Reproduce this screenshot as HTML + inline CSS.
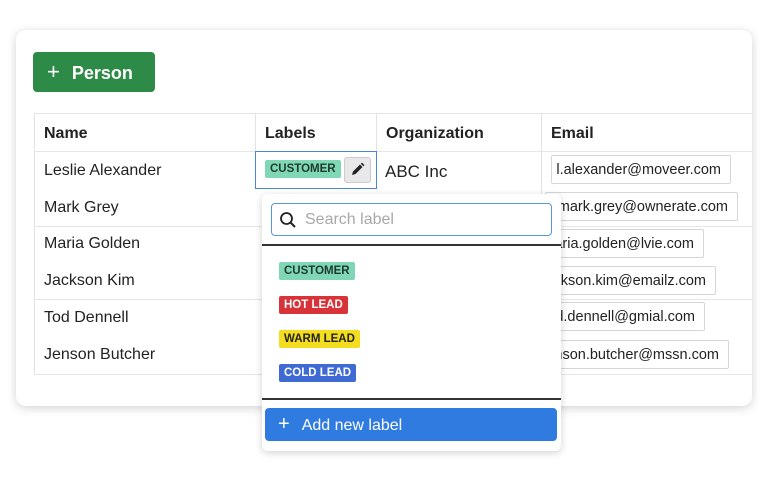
<!DOCTYPE html>
<html><head><style>
*{box-sizing:border-box;margin:0;padding:0}
body{width:768px;height:480px;background:#fff;font-family:"Liberation Sans",sans-serif;position:relative;overflow:hidden;color:#222}
.a{position:absolute}
.card{left:16px;top:30px;width:736px;height:376px;border-radius:10px;background:#fff;box-shadow:0 2px 10px rgba(0,0,0,.18);overflow:hidden}
.btn{left:33px;top:52px;width:122px;height:40px;background:#2e8b47;border-radius:4px;color:#fff;font-size:18px;font-weight:bold;line-height:40px;padding-left:14px}
.th{font-size:16px;font-weight:bold;top:125px}
.td{font-size:16px;color:#222}
.vl{width:1px;background:#e3e3e3}
.hl{height:1px;background:#e6e6e6}
.em{border:1px solid #d6d6d6;border-radius:2px;height:29px;font-size:14.5px;line-height:29px;padding-right:9px;text-align:right;color:#222;background:#fff;white-space:nowrap;overflow:hidden}
.tag{font-size:11.5px;font-weight:bold;height:18px;line-height:18px;padding:0 5px;border-radius:2px}
</style></head><body>
<div class="a card"></div>
<div class="a btn"><span style="font-weight:normal;font-size:22px;margin-right:12px">+</span>Person</div>
<div class="a hl" style="left:34px;top:113px;width:718px"></div>
<div class="a hl" style="left:34px;top:151px;width:718px"></div>
<div class="a hl" style="left:34px;top:226px;width:718px"></div>
<div class="a hl" style="left:34px;top:299px;width:718px"></div>
<div class="a hl" style="left:34px;top:374px;width:718px"></div>
<div class="a vl" style="left:34px;top:113px;height:261px"></div>
<div class="a vl" style="left:255px;top:113px;height:38px"></div>
<div class="a vl" style="left:376px;top:113px;height:38px"></div>
<div class="a vl" style="left:541px;top:113px;height:261px"></div>
<div class="a th" style="left:44px">Name</div>
<div class="a th" style="left:265px">Labels</div>
<div class="a th" style="left:386px">Organization</div>
<div class="a th" style="left:551px">Email</div>
<div class="a td" style="left:44px;top:162px">Leslie Alexander</div>
<div class="a td" style="left:44px;top:199px">Mark Grey</div>
<div class="a td" style="left:44px;top:235px">Maria Golden</div>
<div class="a td" style="left:44px;top:272px">Jackson Kim</div>
<div class="a td" style="left:44px;top:309px">Tod Dennell</div>
<div class="a td" style="left:44px;top:346px">Jenson Butcher</div>
<div class="a td" style="left:385px;top:162px;font-size:17px">ABC Inc</div>
<div class="a" style="left:255px;top:151px;width:122px;height:38px;border:1px solid #4a86d6"></div>
<div class="a tag" style="left:265px;top:160px;background:#7fd7b5;color:#1e3a2e">CUSTOMER</div>
<div class="a" style="left:344px;top:157px;width:27px;height:26px;background:#e8e8ea;border:1px solid #ccc;border-radius:3px"><svg width="25" height="24" viewBox="0 0 25 24"><path d="M7 17l1-3.5 7-7 2.5 2.5-7 7z M15.8 5.8l1.2-1.2 2.5 2.5-1.2 1.2z" fill="#222"/></svg></div>
<div class="a em" style="left:551px;top:155px;width:180px">l.alexander@moveer.com</div>
<div class="a em" style="left:545px;top:192px;width:193px">mark.grey@ownerate.com</div>
<div class="a em" style="left:541px;top:229px;width:163px">maria.golden@lvie.com</div>
<div class="a em" style="left:541px;top:266px;width:175px">jackson.kim@emailz.com</div>
<div class="a em" style="left:541px;top:302px;width:164px">tod.dennell@gmial.com</div>
<div class="a em" style="left:541px;top:340px;width:188px">jenson.butcher@mssn.com</div>
<div class="a" style="left:262px;top:194px;width:299px;height:257px;background:#fff;border-radius:6px;box-shadow:0 2px 8px rgba(0,0,0,.18)"></div>
<div class="a" style="left:271px;top:203px;width:281px;height:33px;border:1px solid #5b93dc;border-radius:4px;background:#fff"></div>
<svg class="a" style="left:279px;top:211px" width="18" height="18" viewBox="0 0 18 18"><circle cx="7.5" cy="7.5" r="5.5" fill="none" stroke="#222" stroke-width="1.8"/><path d="M11.5 11.5l4.5 4.5" stroke="#222" stroke-width="2"/></svg>
<div class="a" style="left:305px;top:211px;font-size:16px;color:#a8a8a8">Search label</div>
<div class="a" style="left:262px;top:244px;width:299px;height:2px;background:#333"></div>
<div class="a tag" style="left:279px;top:262px;background:#7fd7b5;color:#1e3a2e">CUSTOMER</div>
<div class="a tag" style="left:279px;top:296px;background:#d9333a;color:#fff">HOT LEAD</div>
<div class="a tag" style="left:279px;top:330px;background:#f4dc1e;color:#222">WARM LEAD</div>
<div class="a tag" style="left:279px;top:364px;background:#3f69d3;color:#fff">COLD LEAD</div>
<div class="a" style="left:262px;top:398px;width:299px;height:2px;background:#333"></div>
<div class="a" style="left:265px;top:408px;width:292px;height:33px;background:#2f7be0;border-radius:4px;color:#fff;font-size:16px;line-height:33px;padding-left:13px"><span style="font-size:20px;margin-right:12px">+</span>Add new label</div>
</body></html>
